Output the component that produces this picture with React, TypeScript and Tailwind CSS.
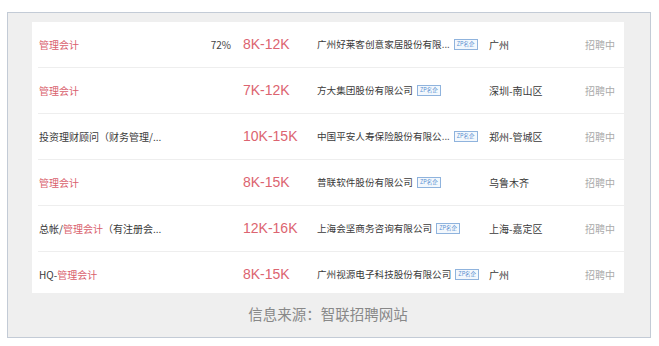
import React from "react";

type Row = {
  title: React.ReactNode;
  pct?: string;
  salary: string;
  company: string;
  loc: string;
};

const red = "text-[#d9606c]";

const rows: Row[] = [
  { title: <span className={red}>管理会计</span>, pct: "72%", salary: "8K-12K", company: "广州好莱客创意家居股份有限...", loc: "广州" },
  { title: <span className={red}>管理会计</span>, salary: "7K-12K", company: "方大集团股份有限公司", loc: "深圳-南山区" },
  { title: <span>投资理财顾问（财务管理/...</span>, salary: "10K-15K", company: "中国平安人寿保险股份有限公...", loc: "郑州-管城区" },
  { title: <span className={red}>管理会计</span>, salary: "8K-15K", company: "普联软件股份有限公司", loc: "乌鲁木齐" },
  {
    title: (
      <span>
        总帐/<span className={red}>管理会计</span>（有注册会...
      </span>
    ),
    salary: "12K-16K",
    company: "上海会坚商务咨询有限公司",
    loc: "上海-嘉定区",
  },
  {
    title: (
      <span>
        HQ-<span className={red}>管理会计</span>
      </span>
    ),
    salary: "8K-15K",
    company: "广州视源电子科技股份有限公司",
    loc: "广州",
  },
];

const font = { fontFamily: '"Noto Sans CJK SC", "Liberation Sans", sans-serif' };

export default function App() {
  return (
    <div className="w-[659px] h-[346px] bg-white pt-[12px] pl-[7px]" style={font}>
      <div className="w-[644px] h-[326px] border border-[#c3cbd6] bg-[#efefef] pt-[9px] pl-[24px] flex flex-col">
        <div className="w-[592px] h-[271px] bg-white overflow-hidden">
          {rows.map((r, i) => (
            <div
              key={i}
              className={
                "ml-[6px] flex items-center pl-[1px] text-[10px] text-[#3a3a3a] " +
                (i === 0 ? "h-[45px]" : "h-[46px] border-t border-[#eeeeee]")
              }
            >
              <div className="w-[204px] flex items-center justify-between pr-[12px]">
                <div className="whitespace-nowrap">{r.title}</div>
                {r.pct && <div className="text-[10px] text-[#444]">{r.pct}</div>}
              </div>
              <div
                className="w-[74px] text-[14px] text-[#dc6470]"
                style={{ fontFamily: '"Liberation Sans", sans-serif' }}
              >
                {r.salary}
              </div>
              <div className="w-[172px] flex items-center whitespace-nowrap">
                <span className="text-[9.6px]">{r.company}</span>
                <span className="ml-[4px] border border-[#8fb3dd] text-[#5a8fd0] text-[5.5px] leading-[9px] px-[2px] bg-[#f3f8fd]">
                  ZP名企
                </span>
              </div>
              <div className="w-[96px] whitespace-nowrap">{r.loc}</div>
              <div className="text-[#aaa]">招聘中</div>
            </div>
          ))}
        </div>
        <div className="w-[592px] flex justify-center mt-[10px] text-[14.5px] text-[#888]">
          信息来源：智联招聘网站
        </div>
      </div>
    </div>
  );
}
